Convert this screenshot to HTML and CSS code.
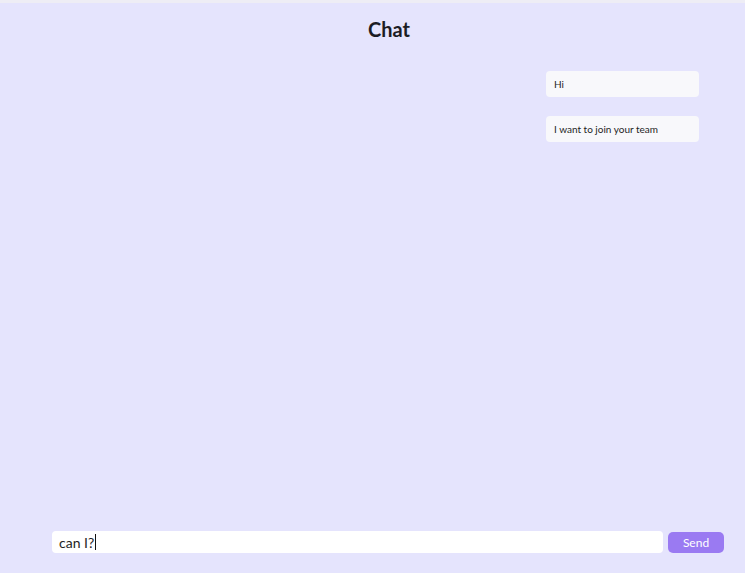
FILE: index.html
```html
<!DOCTYPE html>
<html>
<head>
<meta charset="utf-8">
<link rel="stylesheet" href="styles.css">
</head>
<body>
<div class="topline"></div>
<div class="app">
  <h1 class="title">Chat</h1>
  <div class="messages">
    <div class="bubble">Hi</div>
    <div class="bubble">I want to join your team</div>
  </div>
  <div class="composer">
    <div class="input"><span class="value">can I?</span><span class="caret"></span></div>
    <button class="send">Send</button>
  </div>
</div>
</body>
</html>
```
FILE: styles.css
```css
html, body {
  margin: 0;
  padding: 0;
  height: 100%;
}
body {
  background: #e5e4fd;
  font-family: Lato, "Noto Sans", sans-serif;
  color: #222;
  display: flex;
  flex-direction: column;
}
.topline {
  height: 3px;
  background: #eeedf5;
  flex: none;
}
.app {
  flex: 1;
  display: flex;
  flex-direction: column;
  padding: 0 21px 20px 52px;
}
.title {
  margin: 14px 0 0;
  padding-left: 2px;
  font-size: 20px;
  font-weight: 700;
  text-align: center;
  line-height: 24px;
  color: #1c1c24;
}
.messages {
  flex: 1;
  display: flex;
  flex-direction: column;
  align-items: flex-end;
  gap: 19px;
  padding-top: 30px;
  padding-right: 25px;
}
.bubble {
  width: 153px;
  box-sizing: border-box;
  height: 26px;
  background: #f8f8fb;
  border-radius: 4px;
  font-size: 10px;
  line-height: 26px;
  padding: 0 8px;
  color: #1e1e1e;
}
.composer {
  display: flex;
  align-items: center;
  gap: 5px;
}
.input {
  flex: 1;
  height: 22px;
  background: #fff;
  border-radius: 4px;
  display: flex;
  align-items: center;
  padding: 0 7px;
  font-size: 14px;
  color: #1e1e1e;
}
.caret {
  display: inline-block;
  width: 1px;
  height: 16px;
  background: #111;
  margin-left: 1px;
}
.send {
  width: 56px;
  height: 21px;
  border: none;
  border-radius: 5px;
  background: #9a7af2;
  color: #fff;
  font-family: Lato, "Noto Sans", sans-serif;
  font-size: 12px;
  padding: 0;
}
```
